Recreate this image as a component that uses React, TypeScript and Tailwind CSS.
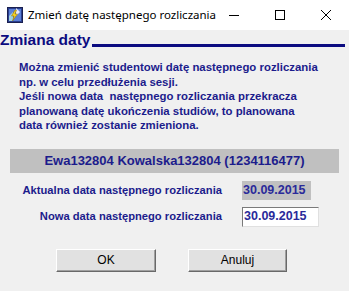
import React from 'react';

const AppIcon: React.FC = () => (
  <svg width="16" height="16" viewBox="0 0 16 16" className="shrink-0">
    <rect x="0.5" y="0.5" width="15" height="15" fill="#2a3f8f" stroke="#1a2050" />
    <rect x="2" y="2" width="12" height="12" fill="#5b7fd6" />
    <path d="M9 1 L13 5 L9 9 Z" fill="#e8e8f8" />
    <path d="M2 9 L6 5 L6 14 L2 14 Z" fill="#9fd0e0" />
    <path d="M8 3 L4.5 9 L7 9 L5.5 14 L10.5 7 L8 7 L9.5 3 Z" fill="#f5d020" stroke="#8a6a00" strokeWidth="0.5" />
  </svg>
);

const TitleBar: React.FC = () => (
  <div className="flex h-[30px] items-center bg-white">
    <div className="ml-[7px] flex items-center">
      <AppIcon />
    </div>
    <span
      className="ml-[5px] min-w-0 flex-1 whitespace-nowrap text-[11.5px] text-black"
      style={{ fontFamily: '"Noto Sans", "Liberation Sans", sans-serif' }}
    >
      Zmień datę następnego rozliczania
    </span>
    <div className="flex h-full w-[46px] items-center justify-center">
      <svg width="10" height="10" viewBox="0 0 10 10">
        <line x1="0" y1="5.5" x2="10" y2="5.5" stroke="#000" strokeWidth="1" />
      </svg>
    </div>
    <div className="flex h-full w-[46px] items-center justify-center">
      <svg width="10" height="10" viewBox="0 0 10 10">
        <rect x="0.5" y="0.5" width="9" height="9" fill="none" stroke="#000" strokeWidth="1" />
      </svg>
    </div>
    <div className="flex h-full w-[46px] items-center justify-center">
      <svg width="10" height="10" viewBox="0 0 10 10">
        <path d="M0 0 L10 10 M10 0 L0 10" stroke="#000" strokeWidth="1" />
      </svg>
    </div>
  </div>
);

const Btn: React.FC<{ label: string; w: string }> = ({ label, w }) => (
  <button
    className={`${w} h-[23px] border border-t-white border-l-white border-r-[#696969] border-b-[#696969] bg-[#e1e1e1] text-[12px] text-black shadow-[inset_-1px_-1px_0_#a0a0a0]`}
    style={{ fontFamily: '"Liberation Sans", Arial, sans-serif' }}
  >
    {label}
  </button>
);

export default function App() {
  return (
    <div
      className="flex h-[291px] w-[349px] flex-col overflow-hidden bg-[#f0f0f0]"
      style={{ fontFamily: '"Liberation Sans", Arial, sans-serif' }}
    >
      <TitleBar />

      <div className="mt-[1px] flex h-[17px] items-end">
        <span className="text-[15.5px] font-bold leading-[17px] text-[#0b0b80]">Zmiana daty</span>
        <div className="mb-[1px] ml-[2px] mr-[4px] h-[3px] flex-1 bg-[#0b0b80]" />
      </div>

      <div className="mt-[12px] pl-[19px] text-[11.4px] font-bold leading-[14.5px] text-[#1c1c8c]">
        <p>Można zmienić studentowi datę następnego rozliczania</p>
        <p>np. w celu przedłużenia sesji.</p>
        <p>Jeśli nowa data&nbsp; następnego rozliczania przekracza</p>
        <p>planowaną datę ukończenia studiów, to planowana</p>
        <p>data również zostanie zmieniona.</p>
      </div>

      <div className="mx-[10px] mt-[16px] flex h-[24px] items-center justify-center bg-[#c0c0c0] text-[13px] font-bold text-[#1c1c8c]">
        Ewa132804 Kowalska132804 (1234116477)
      </div>

      <div className="mt-[8px] flex h-[19px] items-center">
        <span className="w-[222px] text-right text-[11.2px] font-bold text-[#1c1c8c]">
          Aktualna data następnego rozliczania
        </span>
        <div className="ml-[20px] flex h-[19px] w-[69px] items-center bg-[#c0c0c0] pl-[1px] text-[12.5px] font-bold text-[#2a2a9a]">
          30.09.2015
        </div>
      </div>

      <div className="mt-[7px] flex h-[20px] items-center">
        <span className="w-[222px] text-right text-[11.2px] font-bold text-[#1c1c8c]">
          Nowa data następnego rozliczania
        </span>
        <div className="ml-[20px] flex h-[20px] w-[77px] items-center border border-t-[#7a7a7a] border-l-[#7a7a7a] border-r-[#e0e0e0] border-b-[#e0e0e0] bg-white pl-[1px] text-[12.5px] font-bold text-[#2a2a9a]">
          30.09.2015
        </div>
      </div>

      <div className="mt-[22px] flex gap-[32px] pl-[56px]">
        <Btn label="OK" w="w-[100px]" />
        <Btn label="Anuluj" w="w-[99px]" />
      </div>
    </div>
  );
}
